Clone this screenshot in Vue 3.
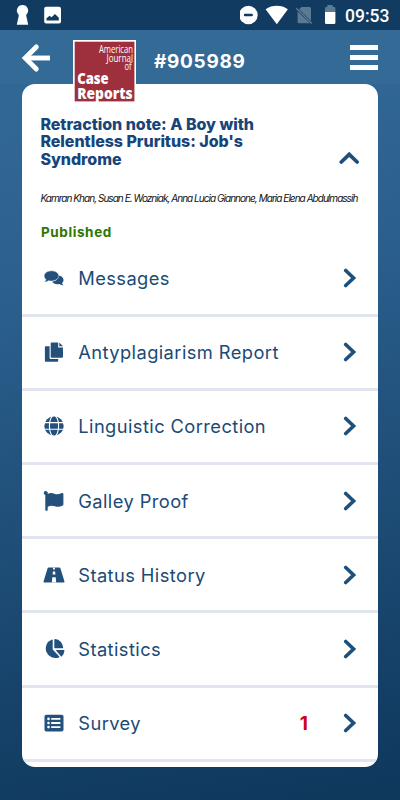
<script setup>
import { ref } from 'vue'

const isExpanded = ref(true)

const items = [
  { id: 'messages', label: 'Messages' },
  { id: 'report', label: 'Antyplagiarism Report' },
  { id: 'linguistic', label: 'Linguistic Correction' },
  { id: 'galley', label: 'Galley Proof' },
  { id: 'history', label: 'Status History' },
  { id: 'statistics', label: 'Statistics' },
  { id: 'survey', label: 'Survey', count: 1 }
]
</script>

<template>
  <div class="screen">
    <div class="status">
      <svg class="status__left" viewBox="0 0 70 30">
        <path fill="#fff" d="M22.500 5a5.600 5.600 0 0 1 4.200 9.300c-.7.700-.5 1.300-.3 2.100l1.800 8.400H16.800l1.800-8.400c.2-.8.400-1.400-.3-2.100A5.600 5.600 0 0 1 22.500 5z" />
        <rect x="44.200" y="6.700" width="16.800" height="16.800" rx="2" fill="#fff" />
        <path fill="#113b60" d="M46.500 20.500v-2.200l3-2.500 2 1.500 3.500-3.300 3.800 3.700v2.800z" />
      </svg>
      <svg class="status__right" viewBox="0 0 100 30">
        <circle cx="8.400" cy="15" r="9.300" fill="#fff" />
        <rect x="3.900" y="13.800" width="9" height="2.500" rx="1" fill="#113b60" />
        <path fill="#fff" d="M25.600 9.200c6.500-4.600 15.800-4.600 22.300 0L36.800 24.200z" />
        <path fill="#5b7a94" d="M61.500 7h8a1.500 1.500 0 0 1 1.500 1.500v12.600L59.200 9.300zM57.600 11.500 70 23.300H59.200a1.600 1.600 0 0 1-1.600-1.600z" />
        <path d="m56.300 8.200 15.500 15.300" stroke="#5b7a94" stroke-width="1.500" />
        <path fill="#5b7a94" d="M87.300 5h5.400v2h1.400a1.300 1.300 0 0 1 1.300 1.300V12H85V8.300A1.300 1.300 0 0 1 86.300 7h1z" />
        <path fill="#fff" d="M85 12h10.400v10.700a1.300 1.300 0 0 1-1.300 1.300h-7.800a1.300 1.300 0 0 1-1.300-1.300z" />
      </svg>
      <span class="status__time">09:53</span>
    </div>

    <header class="header">
      <svg class="header__back" viewBox="0 0 30 30" fill="none" stroke="#fff" stroke-width="4.900">
        <path d="M29 15H4" />
        <path d="M15.300 3.900 4.200 15l11.100 11.100" stroke-linecap="round" />
      </svg>
      <svg class="header__logo" viewBox="0 0 64 64">
        <rect width="63" height="62.500" fill="#fff" />
        <rect x="1.700" y="1.700" width="59.700" height="59.700" fill="#9e2f3c" />
        <g class="logo-small" text-anchor="end">
          <text x="60" y="12.500" textLength="34" lengthAdjust="spacingAndGlyphs">American</text>
          <text x="60" y="21.500" textLength="26.500" lengthAdjust="spacingAndGlyphs">Journal</text>
          <text x="58.600" y="30.300" textLength="7" lengthAdjust="spacingAndGlyphs">of</text>
        </g>
        <g class="logo-big">
          <text x="4.200" y="43.600" textLength="31.500" lengthAdjust="spacingAndGlyphs">Case</text>
          <text x="4.200" y="58.800" textLength="55.500" lengthAdjust="spacingAndGlyphs">Reports</text>
        </g>
      </svg>
      <span class="header__number">#905989</span>
      <button class="header__menu"><i></i><i></i><i></i></button>
    </header>

    <main class="card">
      <section class="article">
        <div class="article__top">
          <h1 class="article__title">Retraction note: A Boy with<br />Relentless Pruritus: Job's<br />Syndrome</h1>
          <svg class="article__toggle" viewBox="0 0 20 14" @click="isExpanded = !isExpanded">
            <path d="m2.300 11 7.900-7.700 7.900 7.700" fill="none" stroke="#1f507b" stroke-width="3.800" stroke-linecap="round" />
          </svg>
        </div>
        <p class="article__authors">Kamran Khan, Susan E. Wozniak, Anna Lucia Giannone, Maria Elena Abdulmassih</p>
        <p class="article__state">Published</p>
      </section>

      <ul class="menu" v-if="isExpanded">
        <li class="menu__item" v-for="item in items" :key="item.id">
          <svg class="menu__icon" viewBox="0 0 22 22">
            <template v-if="item.id === 'messages'">
              <path d="M14.500 8.300c3.600.2 6 2.200 6 4.600 0 1.300-.6 2.400-1.500 3.200.3.900.9 1.500 1.500 2.100-1.800.1-3.200-.5-4.100-1.100-3.200.6-6.200-.4-7.300-2.600 4.100-.3 6.600-2.700 5.400-6.200z" />
              <path d="M8.500 3.800c4 0 7.300 2.200 7.300 5s-3.300 5.300-7.300 5.300c-1 0-2-.1-2.900-.4-1 .8-2.500 1.300-4.200 1.300.7-.7 1.300-1.500 1.500-2.500C1.800 11.500 1.100 10.200 1.100 8.800c0-2.800 3.400-5 7.400-5z" stroke="#fff" stroke-width=".5" />
            </template>
            <template v-else-if="item.id === 'report'">
              <path d="M8.700 1.500h6.500v5H20v9.300a1 1 0 0 1-1 1H8.700a1 1 0 0 1-1-1V2.500a1 1 0 0 1 1-1zM16.300 1.500 20 5.300h-3.700z" />
              <path d="M2.800 5.200h3.800v11.300c0 1 .6 1.600 1.600 1.600h7v1.700a.9.900 0 0 1-.9.900H2.800a.9.900 0 0 1-.9-.9V6.100a.9.900 0 0 1 .9-.9z" />
            </template>
            <template v-else-if="item.id === 'linguistic'">
              <circle cx="11" cy="11" r="9.700" />
              <g fill="none" stroke="#fff" stroke-width="1.100">
                <ellipse cx="11" cy="11" rx="4.600" ry="10.500" />
                <path d="M1 7.600h20M1 14.300h20" />
              </g>
            </template>
            <path v-else-if="item.id === 'galley'" d="M4.600 3.900c2.700-1.200 4.800-.9 7.300 0 2.300.8 4.100.4 6.600-.7.900-.4 1.900.1 1.900 1.100v10.100c0 .5-.2.800-.7 1.100-2.700 1.600-5.300 1.500-7.800.7-2.500-.8-4.500-.8-7.200.5v3c0 .6-.4 1-.9 1h-.6c-.5 0-.9-.4-.9-1V5A2 2 0 1 1 4.600 3.900z" />
            <template v-else-if="item.id === 'history'">
              <path d="M5.700 3.600h10.600c.5 0 .9.200 1.100.7l4 12.900c.3.700-.2 1.400-1 1.400H1.600c-.8 0-1.300-.7-1-1.400l4-12.900c.2-.5.600-.7 1.100-.7z" />
              <path d="M10.200 3.500h1.600l.2 2h-2zM9.900 7.400h2.200l.3 3H9.600zM9.300 13.300h3.400l.5 5.300H8.800z" fill="#fff" />
            </template>
            <template v-else-if="item.id === 'statistics'">
              <path d="M9.700 2.100v9.500l6.400 6.700a.7.700 0 0 1-.1 1.100A9.600 9.600 0 1 1 8.900 1.400c.4 0 .8.300.8.700z" />
              <path d="M12 1a9 9 0 0 1 8.200 8.500c0 .4-.2.700-.6.700H12a.7.700 0 0 1-.7-.7V1.600c0-.4.300-.6.700-.6zM12.600 11.900h8.200c.4 0 .7.300.7.700a9 9 0 0 1-2.600 5.600.7.700 0 0 1-1 0z" />
            </template>
            <template v-else>
              <rect x="1.500" y="2.700" width="19" height="16.700" rx="1.900" />
              <g fill="#fff">
                <circle cx="5.500" cy="6.900" r="1.300" />
                <circle cx="5.500" cy="11" r="1.300" />
                <circle cx="5.500" cy="15.100" r="1.300" />
                <path d="M8.200 6h9.200v1.800H8.200zM8.200 10.100h9.200v1.800H8.200zM8.200 14.200h9.200V16H8.200z" />
              </g>
            </template>
          </svg>
          <span class="menu__label">{{ item.label }}</span>
          <span class="menu__count" v-if="item.count">{{ item.count }}</span>
          <svg class="menu__arrow" viewBox="0 0 14 20">
            <path d="m2.700 2.500 7.900 7.500-7.900 7.500" fill="none" stroke="#1f507b" stroke-width="3.600" stroke-linecap="round" />
          </svg>
        </li>
      </ul>
    </main>
  </div>
</template>

<style>
body {
  margin: 0;
}
</style>

<style scoped>
.screen {
  width: 400px;
  height: 800px;
  overflow: hidden;
  background: linear-gradient(170deg, #316795 15%, #2c618f 32%, #0f385d 98%);
  font-family: Inter, "Liberation Sans", sans-serif;
  color: #1b4a75;
}

.status {
  display: flex;
  height: 30px;
  background: #113b60;
}

.status__left {
  width: 70px;
  height: 30px;
}

.status__right {
  width: 100px;
  height: 30px;
  margin-left: 170px;
}

.status__time {
  margin-left: 5px;
  font: 500 17.500px/32px Roboto, sans-serif;
  color: #fff;
}

.header {
  display: flex;
  height: 54px;
  background: #336a96;
}

.header__back {
  width: 30px;
  height: 30px;
  margin: 12.500px 0 0 21px;
}

.header__logo {
  position: relative;
  z-index: 1;
  flex: none;
  width: 64px;
  height: 64px;
  margin: 10px 0 0 21.500px;
  overflow: visible;
}

.logo-small {
  font: 10px "Open Sans", sans-serif;
  fill: #fff;
}

.logo-big {
  font: 800 16px "Open Sans", sans-serif;
  fill: #fff;
}

.header__number {
  margin-left: 17.500px;
  width: 100px;
  font-size: 19px;
  font-weight: 700;
  line-height: 63px;
  letter-spacing: 0.7px;
  color: #fff;
}

.header__menu {
  display: flex;
  flex-direction: column;
  gap: 5px;
  width: 28px;
  margin: 15px 0 0 96px;
  padding: 0;
  border: 0;
  background: none;
}

.header__menu i {
  width: 28px;
  height: 5px;
  background: #fff;
}

.card {
  box-sizing: border-box;
  width: 355.500px;
  height: 683px;
  margin-left: 22.400px;
  border-radius: 13px;
  overflow: hidden;
  background: #fff;
}

.article {
  height: 158.500px;
  padding: 0 20px 0 18px;
  box-sizing: border-box;
}

.article__top {
  display: flex;
  justify-content: space-between;
  padding-top: 31.500px;
}

.article__title {
  margin: 0;
  font-size: 16px;
  font-weight: 800;
  line-height: 17.800px;
  letter-spacing: -0.04px;
  color: #17457a;
}

.article__toggle {
  width: 20px;
  height: 14px;
  margin: 35px -1px 0 0;
}

.article__authors {
  margin: 22.500px 0 0;
  font-size: 10px;
  font-style: italic;
  line-height: 14px;
  letter-spacing: -0.96px;
  white-space: nowrap;
  color: #111;
}

.article__state {
  margin: 17.500px 0 0 0.600px;
  font-size: 13.500px;
  font-weight: 700;
  line-height: 18px;
  letter-spacing: 0.6px;
  color: #2f7600;
}

.menu {
  margin: 0;
  padding: 0;
  list-style: none;
}

.menu__item {
  display: flex;
  align-items: center;
  box-sizing: border-box;
  height: 74.200px;
  padding: 0 21px 0 20.500px;
  border-bottom: 3px solid #e1e5ef;
}

.menu__icon {
  width: 22px;
  height: 22px;
  fill: #24517b;
}

.menu__label {
  flex: 1;
  margin-left: 13.400px;
  font-size: 18.300px;
  line-height: 24px;
  letter-spacing: 0.42px;
}

.menu__count {
  margin-right: 35px;
  font-size: 19px;
  font-weight: 700;
  color: #d0021b;
}

.menu__arrow {
  width: 14px;
  height: 20px;
}
</style>
